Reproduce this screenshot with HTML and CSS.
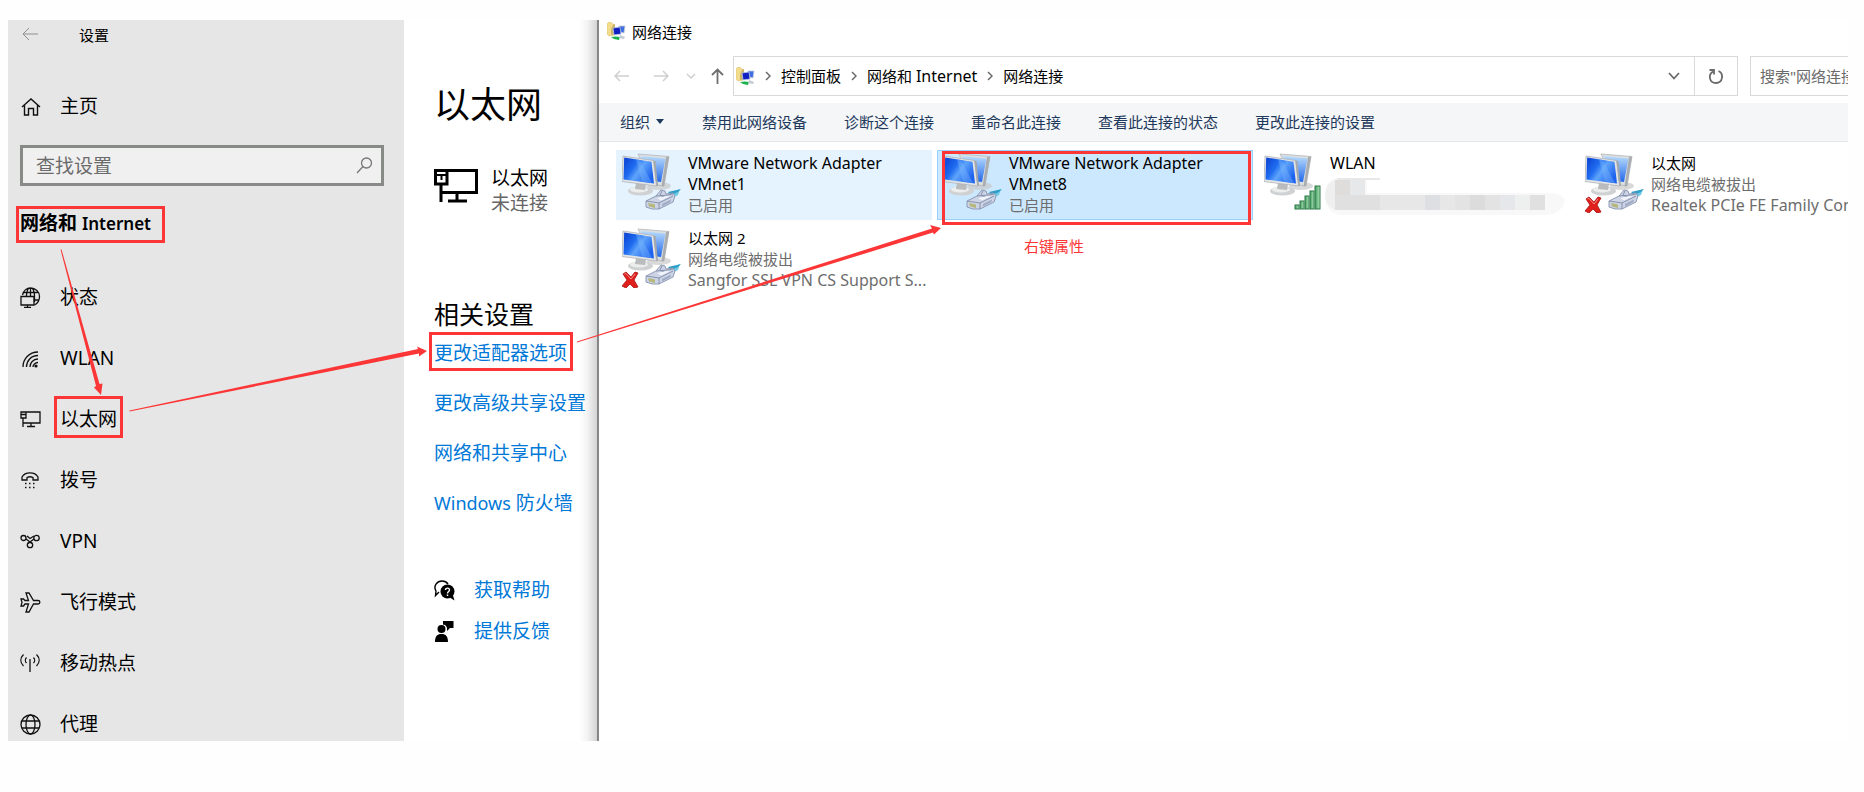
FILE: index.html
```html
<!DOCTYPE html>
<html lang="zh-CN">
<head>
  <meta charset="UTF-8">
  <meta name="viewport" content="width=device-width, initial-scale=1.0">
  <title>网络连接</title>
  <link rel="stylesheet" href="styles.css">
</head>
<body>

  <!-- Shared icons -->
  <svg class="sprite" aria-hidden="true">
    <defs>
      <linearGradient id="screen" x1="0" y1="0" x2="1" y2="0.6">
        <stop offset="0" stop-color="#0a3fd0"/>
        <stop offset="0.4" stop-color="#1f6cf0"/>
        <stop offset="0.6" stop-color="#5fa4fb"/>
        <stop offset="1" stop-color="#1d63ee"/>
      </linearGradient>
      <linearGradient id="screenBack" x1="0" y1="0" x2="0" y2="1">
        <stop offset="0" stop-color="#b9dcfc"/>
        <stop offset="1" stop-color="#2268ea"/>
      </linearGradient>
      <linearGradient id="bars" x1="0" y1="0" x2="1" y2="0">
        <stop offset="0" stop-color="#3f9a5e"/>
        <stop offset="1" stop-color="#b5e6bd"/>
      </linearGradient>
    </defs>

    <symbol id="monitors" viewBox="0 0 60 60">
      <ellipse cx="37" cy="33" rx="12" ry="4" fill="#c9c9c9" opacity="0.7"/>
      <path d="M16 1L47 3.5L42 33L30 31Z" fill="#dcdfe2" stroke="#b4b7ba" stroke-width="0.8"/>
      <path d="M18.500 3L43.500 5.500L39 29L31 28Z" fill="url(#screenBack)"/>
      <path d="M47 3.500L42 33L39.500 33.500L44 4Z" fill="#a9adb0"/>
      <ellipse cx="18.500" cy="38" rx="12.500" ry="4.500" fill="#cfd1d3"/>
      <ellipse cx="17" cy="36.500" rx="9" ry="3" fill="#eceded"/>
      <path d="M14 30L24 31L23 37L13 36Z" fill="#b9bbbd"/>
      <path d="M1 3L31.500 7.500L34.500 33L0 28.500Z" fill="#e3e5e7" stroke="#b1b4b7" stroke-width="0.8"/>
      <path d="M31.500 7.500L33.500 8L36 33L34.500 33Z" fill="#a4a8ab"/>
      <path d="M2.200 4.500L29.500 8.700L32 30.500L1.500 26.500Z" fill="url(#screen)"/>
      <path d="M14 6.500L18 7.200L30 30L20 28.500Z" fill="#7db9fd" opacity="0.4"/>
    </symbol>

    <symbol id="plug" viewBox="0 0 60 60">
      <path d="M47 41L58 36L56 42L50 45Z" fill="#6fcbe6"/>
      <path d="M46 39L59 36L56 39L49 42Z" fill="#2f9fc8"/>
      <path d="M24 48L34 43L39 37L43 38L44 41L51 40L53 43L51 49L37 56L30 56L24 54Z" fill="#ccd4e6" stroke="#8793ae" stroke-width="0.900"/>
      <path d="M34 43L46 42L51 41M24 48L37 50L51 43M37 50V56M40 38L38 42L44 45" fill="none" stroke="#7f8ba6" stroke-width="0.900"/>
      <path d="M35 45L45 43L48 43.500L39 47.500Z" fill="#f1f4fa"/>
      <path d="M40 51L49 46.500L48.500 49L40 53.500Z" fill="#9fabc6"/>
      <path d="M26 50L33 51.500V55L27 53.500Z" fill="#b6b77c"/>
    </symbol>

    <symbol id="cross" viewBox="0 0 60 60">
      <path d="M1 46L4 44L9 49L13 44L16 45L12 52L16 59L12 60L8 56L4 60L0 58L5 52Z" fill="#e0201c" stroke="#a8120f" stroke-width="0.800"/>
      <path d="M2.500 46L4 45.500L9 51L13 46" fill="none" stroke="#f58a85" stroke-width="1"/>
    </symbol>

    <symbol id="signal" viewBox="0 0 60 60">
      <g fill="url(#bars)" stroke="#2c7a47" stroke-width="1">
        <rect x="31" y="52" width="4" height="4"/>
        <rect x="36" y="48" width="4" height="8"/>
        <rect x="41" y="43" width="4" height="13"/>
        <rect x="46" y="38" width="4" height="18"/>
        <rect x="51" y="33" width="5" height="23"/>
      </g>
    </symbol>

    <symbol id="folder-net" viewBox="0 0 19 19">
      <path d="M0 2L2 0H4L5 2L7 2V13L2 14L0 12Z" fill="#f3dc8c" stroke="#dcc068" stroke-width="0.600"/>
      <path d="M6 3L8 2V12L4 13V7Z" fill="#c9b26a"/>
      <path d="M12 4L18 4L17 11L13 10Z" fill="#3d6fe0" stroke="#c4cbd8" stroke-width="0.800"/>
      <path d="M6 6L13 5L14 12L7 13Z" fill="#1020c0" stroke="#b9c6e8" stroke-width="0.800"/>
      <path d="M4 15L9 14.500L13 15L12 18L7 17Z" fill="#19b24b"/>
      <path d="M13 13L18 15L17 17L12 16Z" fill="#c3cbd3"/>
    </symbol>

    <symbol id="chevron" viewBox="0 0 6 10">
      <path d="M1 1L5 5L1 9" fill="none" stroke="#6a6a6a" stroke-width="1.500"/>
    </symbol>

    <symbol id="ethernet" viewBox="0 0 44 34">
      <path d="M13 1.500H42.500V23.500H7" fill="none" stroke="currentColor" stroke-width="3"/>
      <path d="M1.500 1.500H13V15H1.500ZM7 15V33M23 24V32M14 32H33" fill="none" stroke="currentColor" stroke-width="3"/>
      <path d="M3 6H12M7.500 6V11" fill="none" stroke="currentColor" stroke-width="2"/>
    </symbol>
  </svg>

  <div class="desktop">

    <aside class="sidebar">
      <div class="sidebar-title">
        <button type="button" class="icon-btn" aria-label="后退">
          <svg width="21" height="14" viewBox="0 0 21 14" fill="none" stroke="#8f8f8f"><path d="M16 7H1M7 1L1 7L7 13"/></svg>
        </button>
        <span>设置</span>
      </div>

      <a href="#" class="nav-link home">
        <svg viewBox="0 0 21 21" fill="none" stroke="#111" stroke-width="1.400"><path d="M2 11L11 3L20 11M4.500 9V19H8.500V12.500H13.500V19H17.500V9"/></svg>
        <span>主页</span>
      </a>

      <div class="search">
        <input type="text" placeholder="查找设置" aria-label="查找设置">
        <svg width="17" height="17" viewBox="0 0 17 17" fill="none" stroke="#777" stroke-width="1.300"><circle cx="10.500" cy="6" r="5"/><path d="M7 9.500L1 16"/></svg>
      </div>

      <h2 class="sidebar-heading"><span class="marked mark-heading">网络和 <span class="en">Internet</span></span></h2>

      <nav class="sidebar-nav">
        <a href="#" class="nav-link">
          <svg viewBox="0 0 21 21" fill="none" stroke="#111" stroke-width="1.300"><path d="M2.500 8C3.500 3.500 7 1 10.500 1C15.500 1 19.500 5 19.500 9.500C19.500 13.500 17.500 16.500 14.500 18M3.500 5.500H17.500M9 1C7 3 6.500 6 6.500 9.500M12 1C14 3 14.500 6 14.500 9.500V15M14.500 13H19M10.500 1V9.500"/><path d="M1 9.500H14V18H1ZM7.500 18V20.500M4 20.500H11"/></svg>
          <span>状态</span>
        </a>
        <a href="#" class="nav-link">
          <svg viewBox="0 0 21 21" fill="none" stroke="#111" stroke-width="1.300"><path d="M3 19C3 11 9 4 18 4M6.500 19C6.500 13 11 7.500 18 7.500M10 19C10 15 13 11 18 11M13 19C13 17 15 14.500 18 14.500"/><circle cx="16" cy="18" r="1.600" fill="#111" stroke="none"/></svg>
          <span>WLAN</span>
        </a>
        <a href="#" class="nav-link">
          <svg viewBox="0 0 21 21" fill="none" stroke="#111" stroke-width="1.300"><path d="M6 3H20V14H3M1 3H6V9H1ZM3 9V18M11 14V17.500M7 17.500H15M1 5.500H6"/></svg>
          <span class="marked mark-nav">以太网</span>
        </a>
        <a href="#" class="nav-link">
          <svg viewBox="0 0 21 21" fill="none" stroke="#111" stroke-width="1.300"><path d="M2 10V7C5 1.500 15 1.500 18 7V10H13V7.500C11 6.500 9 6.500 7 7.500V10Z"/><path d="M5 13.500H15M5 17.500H15" stroke-width="1.500" stroke-dasharray="1.500 2.500"/></svg>
          <span>拨号</span>
        </a>
        <a href="#" class="nav-link">
          <svg viewBox="0 0 21 21" fill="none" stroke="#111" stroke-width="1.300"><circle cx="3.500" cy="7" r="2.500"/><circle cx="16.500" cy="7" r="2.700"/><circle cx="10" cy="14" r="2.700"/><path d="M6 8L12 12.500M14 8L8 12.500M7 5L10 7.500L14 5"/></svg>
          <span>VPN</span>
        </a>
        <a href="#" class="nav-link">
          <svg viewBox="0 0 21 21" fill="none" stroke="#111" stroke-width="1.300"><path d="M1 7H3.500L5 8.500H8.500L6 1H9L13.500 8.500H18C20.500 8.500 20.500 12 18 12H13.500L9 20H6L8.500 12H5L3.500 14H1L2 10.300Z"/></svg>
          <span>飞行模式</span>
        </a>
        <a href="#" class="nav-link">
          <svg viewBox="0 0 21 21" fill="none" stroke="#111" stroke-width="1.300"><path d="M10 6V19M6.500 10C5 8.500 5 6 6.500 4.500M13.500 10C15 8.500 15 6 13.500 4.500M3.500 13C0 9.500 0 5 3.500 1.500M16.500 13C20 9.500 20 5 16.500 1.500"/></svg>
          <span>移动热点</span>
        </a>
        <a href="#" class="nav-link">
          <svg viewBox="0 0 21 21" fill="none" stroke="#111" stroke-width="1.300"><circle cx="10.500" cy="10.500" r="9.500"/><ellipse cx="10.500" cy="10.500" rx="4.500" ry="9.500"/><path d="M2 7H19M2 14H19"/></svg>
          <span>代理</span>
        </a>
      </nav>
    </aside>

    <main class="settings">
      <h1>以太网</h1>
      <div class="status">
        <svg width="44" height="34"><use href="#ethernet"/></svg>
        <p>以太网<br><span>未连接</span></p>
      </div>

      <h2>相关设置</h2>
      <ul class="links">
        <li><a href="#" class="marked mark-link">更改适配器选项</a></li>
        <li><a href="#">更改高级共享设置</a></li>
        <li><a href="#">网络和共享中心</a></li>
        <li><a href="#"><span class="en">Windows</span> 防火墙</a></li>
      </ul>

      <ul class="support">
        <li>
          <svg width="21" height="21" viewBox="0 0 21 21"><path d="M5 12L1.500 15.500L2 11C-1 6 3 1 8 1C11 1 13 2.500 14 4" fill="none" stroke="#000" stroke-width="1.400"/><circle cx="13.500" cy="11.500" r="7"/><path d="M15 17L20.500 20.500L18.500 14Z"/><path d="M11.500 10C11.500 7.500 15.500 7.500 15.500 10C15.500 11.500 13.500 11.500 13.500 13.500M13.500 14.500V16" fill="none" stroke="#fff" stroke-width="1.400"/></svg>
          <a href="#">获取帮助</a>
        </li>
        <li>
          <svg width="21" height="21" viewBox="0 0 21 21"><circle cx="7.500" cy="8" r="4"/><path d="M1 21C1 15.500 3 13 7.500 13C12 13 14 15.500 14 21ZM9 0H19.500V7H16L13 10V7C12 4 11 4 9 3.500Z"/></svg>
          <a href="#">提供反馈</a>
        </li>
      </ul>
    </main>

    <section class="explorer">
      <header class="window-title">
        <svg width="19" height="19"><use href="#folder-net"/></svg>
        <span>网络连接</span>
      </header>

      <div class="address-row">
        <div class="history">
          <button type="button" class="icon-btn" aria-label="后退"><svg width="16" height="12" viewBox="0 0 16 12" fill="none" stroke="#cfcfcf" stroke-width="1.500"><path d="M15 6H1M6 1L1 6L6 11"/></svg></button>
          <button type="button" class="icon-btn" aria-label="前进"><svg width="16" height="12" viewBox="0 0 16 12" fill="none" stroke="#cfcfcf" stroke-width="1.500"><path d="M1 6H15M10 1L15 6L10 11"/></svg></button>
          <button type="button" class="icon-btn" aria-label="最近"><svg width="10" height="6" viewBox="0 0 10 6" fill="none" stroke="#cfcfcf" stroke-width="1.500"><path d="M1 1L5 5L9 1"/></svg></button>
          <button type="button" class="icon-btn" aria-label="上移"><svg width="13" height="16" viewBox="0 0 13 16" fill="none" stroke="#6e6e6e" stroke-width="1.800"><path d="M6.500 16V2M1 7L6.500 1.500L12 7"/></svg></button>
        </div>

        <div class="address">
          <svg width="19" height="19"><use href="#folder-net"/></svg>
          <svg class="sep" width="6" height="10"><use href="#chevron"/></svg>
          <a href="#">控制面板</a>
          <svg class="sep" width="6" height="10"><use href="#chevron"/></svg>
          <a href="#">网络和 <span class="en">Internet</span></a>
          <svg class="sep" width="6" height="10"><use href="#chevron"/></svg>
          <a href="#">网络连接</a>
          <button type="button" class="icon-btn dropdown" aria-label="展开"><svg width="12" height="8" viewBox="0 0 12 8" fill="none" stroke="#6a6a6a" stroke-width="1.800"><path d="M1 1L6 6.500L11 1"/></svg></button>
          <button type="button" class="icon-btn refresh" aria-label="刷新"><svg width="16" height="17" viewBox="0 0 16 17" fill="none" stroke="#6a6a6a" stroke-width="1.800"><path d="M10.500 3C16 5.500 15 15 8 15C1 15 0 6.500 5 3.500M1.500 2H6V6.500"/></svg></button>
        </div>

        <input class="explorer-search" type="text" placeholder="搜索&quot;网络连接&quot;" aria-label="搜索网络连接">
      </div>

      <div class="toolbar">
        <button type="button">组织<svg width="10" height="5" viewBox="0 0 10 5"><path d="M1 0H9L5 5Z" fill="#1e395b"/></svg></button>
        <button type="button">禁用此网络设备</button>
        <button type="button">诊断这个连接</button>
        <button type="button">重命名此连接</button>
        <button type="button">查看此连接的状态</button>
        <button type="button">更改此连接的设置</button>
      </div>

      <div class="adapters">
        <div class="adapter hover">
          <svg width="60" height="60"><use href="#monitors"/><use href="#plug"/></svg>
          <p><b class="en">VMware Network Adapter<br>VMnet1</b><br><span>已启用</span></p>
        </div>
        <div class="adapter selected marked mark-adapter">
          <svg width="60" height="60"><use href="#monitors"/><use href="#plug"/></svg>
          <p><b class="en">VMware Network Adapter<br>VMnet8</b><br><span>已启用</span></p>
          <strong class="note">右键属性</strong>
        </div>
        <div class="adapter">
          <svg width="60" height="60"><use href="#monitors"/><use href="#signal"/></svg>
          <p><b class="en">WLAN</b></p>
          <!-- Hidden network name -->
          <svg class="mosaic" width="242" height="40" viewBox="0 0 242 40">
            <path d="M12 1H55V3H42V16H222C234 16 238 19 240 23C238 32 232 38 220 38H18C6 38 0 30 0 19C0 8 5 1 12 1Z" fill="#f8f8f8"/>
            <path d="M10 3C3 6 0 12 0 19C1 26 4 30 10 33Z" fill="#eeefee"/>
            <path d="M12 1H55V3H12Z" fill="#e8e8e8"/>
            <path d="M10 3H25V18H10Z" fill="#dfdddc"/>
            <path d="M25 3H40V18H25Z" fill="#e7e8ea"/>
            <path d="M10 18H55V33H10ZM205 18H220V33H205Z" fill="#e0e0e1"/>
            <path d="M55 18H100V33H55ZM115 18H130V33H115Z" fill="#e7e7e8"/>
            <path d="M100 18H115V33H100Z" fill="#dddfe2"/>
            <path d="M130 18H145V33H130ZM160 18H175V33H160Z" fill="#e3e3e4"/>
            <path d="M145 18H160V33H145Z" fill="#dddcdc"/>
            <path d="M175 18H190V33H175Z" fill="#e6e7ea"/>
            <path d="M190 18H205V33H190Z" fill="#eeefef"/>
          </svg>
        </div>
        <div class="adapter">
          <svg width="60" height="60"><use href="#monitors"/><use href="#plug"/><use href="#cross"/></svg>
          <p>以太网<br><span>网络电缆被拔出<br><b class="en">Realtek PCIe FE Family Controller</b></span></p>
        </div>
        <div class="adapter">
          <svg width="60" height="60"><use href="#monitors"/><use href="#plug"/><use href="#cross"/></svg>
          <p>以太网 2<br><span>网络电缆被拔出<br><b class="en">Sangfor SSL VPN CS Support S...</b></span></p>
        </div>
      </div>
    </section>

    <!-- Arrows between the marked steps -->
    <svg class="arrows" width="960" height="420" viewBox="0 0 960 420" fill="#fc3636" aria-hidden="true">
      <path d="M52.500 229.500L53.500 229.500L91.500 364L94.500 363.500L93 375L86 367.500L88 366Z"/>
      <path d="M121.500 390.500L410 329L409 326.500L419 331L411 336.500L411 333.500L121.500 391.500Z"/>
      <path d="M569 321.500L924 208.500L922 205L933 208L926 214.500L925 212.500L569 322.500Z"/>
    </svg>
  </div>

</body>
</html>
```
FILE: styles.css
```css
* {
  margin: 0;
  padding: 0;
  box-sizing: border-box;
}

body {
  font-family: 'Noto Sans', 'Noto Sans CJK SC', sans-serif;
  background: #fefefe;
  color: #000;
  font-size: 15px;
  min-height: 100vh;
  display: flex;
  padding: 20px 16px 51px 8px;
}

a {
  color: inherit;
  text-decoration: none;
}

ul {
  list-style: none;
}

button {
  font: inherit;
  color: inherit;
  background: none;
  border: none;
  cursor: pointer;
}

svg {
  display: block;
  flex: none;
}

.sprite {
  position: absolute;
  width: 0;
  height: 0;
}

.desktop {
  position: relative;
  flex: 1;
  min-width: 0;
  display: flex;
}

.icon-btn {
  display: flex;
  align-items: center;
}

/* Red boxes round the steps */
.marked {
  position: relative;
}

.marked::after {
  content: '';
  position: absolute;
  border: 3px solid #fc3636;
  pointer-events: none;
}

.mark-heading::after {
  inset: -5px -14px -8px -4px;
}

.mark-nav::after {
  inset: -11px -6px -7px -6px;
}

.mark-link::after {
  inset: -9px -6px -6px -5px;
}

.mark-adapter::after {
  inset: 1px 2px -5px 5px;
}

/* Settings sidebar */
.sidebar {
  width: 396px;
  flex: none;
  background: #e6e6e6;
  padding: 0 20px 5px 12px;
}

.sidebar-title {
  display: flex;
  align-items: center;
  gap: 36px;
  height: 28px;
  padding-left: 2px;
}

.nav-link {
  display: flex;
  align-items: center;
  gap: 19px;
  font-size: 19px;
  line-height: 24px;
}

.nav-link svg {
  width: 21px;
  height: 21px;
}

.home {
  margin-top: 46px;
}

.search {
  display: flex;
  align-items: center;
  height: 41px;
  margin-top: 27px;
  padding: 0 8px 0 13px;
  border: 3px solid #888a88;
  background: #f0f0f0;
}

.search input {
  flex: 1;
  min-width: 0;
  border: none;
  outline: none;
  background: none;
  font: inherit;
  font-size: 19px;
}

input::placeholder {
  color: #6b6b6b;
  opacity: 1;
}

.sidebar-heading {
  margin-top: 25px;
  font-size: 19px;
  line-height: 24px;
  font-weight: 600;
}

.sidebar-heading .marked {
  display: block;
  width: fit-content;
}

.en {
  line-height: 1;
}

.sidebar-heading .en {
  font-size: 17px;
}

.sidebar-nav {
  display: flex;
  flex-direction: column;
  gap: 37px;
  margin-top: 50px;
}

/* Settings page */
.settings {
  width: 193px;
  flex: none;
  padding: 61px 0 0 30px;
  background: linear-gradient(to left, #d4d4d4, #f4f4f4 10px, #fff 18px);
  font-size: 19px;
  line-height: 24px;
  white-space: nowrap;
}

.settings h1 {
  font-size: 36px;
  line-height: 48px;
  font-weight: 400;
}

.settings .en {
  font-size: 18px;
}

.status {
  display: flex;
  gap: 13px;
  margin-top: 37px;
  line-height: 25px;
}

.status svg {
  margin-top: 3px;
}

.status span {
  color: #666;
}

.settings h2 {
  margin-top: 82px;
  font-size: 25px;
  line-height: 32px;
  font-weight: 400;
}

.settings a {
  display: inline-block;
  color: #0078d7;
}

.links {
  display: flex;
  flex-direction: column;
  gap: 26px;
  margin-top: 11px;
}

.support {
  display: flex;
  flex-direction: column;
  gap: 17px;
  margin-top: 63px;
}

.support li {
  display: flex;
  align-items: center;
  gap: 19px;
}

/* Network connections window */
.explorer {
  flex: 1;
  min-width: 0;
  overflow: hidden;
  border-left: 2px solid #868686;
  background: #fff;
  white-space: nowrap;
}

.explorer .en {
  font-size: 16px;
  font-weight: 400;
}

.window-title {
  display: flex;
  align-items: center;
  gap: 6px;
  height: 23px;
  padding-left: 8px;
}

.address-row {
  display: flex;
  height: 40px;
  margin-top: 13px;
  padding-left: 15px;
}

.history {
  display: grid;
  grid-template-columns: 39px 33px 25px 22px;
  align-items: center;
}

.address {
  flex: 1;
  display: flex;
  align-items: center;
  padding-left: 2px;
  border: 1px solid #d9d9d9;
}

.address a {
  padding-bottom: 2px;
}

.sep {
  margin: 0 10px;
}

.dropdown {
  margin-left: auto;
  padding: 0 14px;
}

.refresh {
  width: 43px;
  height: 100%;
  justify-content: center;
  border-left: 1px solid #d9d9d9;
}

.explorer-search {
  width: 98px;
  flex: none;
  margin-left: 12px;
  padding-left: 9px;
  border: 1px solid #d9d9d9;
  border-right: none;
  outline: none;
  font: inherit;
}

.toolbar {
  display: flex;
  align-items: center;
  gap: 37px;
  height: 39px;
  margin-top: 7px;
  padding: 0 0 2px 21px;
  background: #f4f6f8;
  border-bottom: 1px solid #e4e7ea;
  color: #1e395b;
}

.toolbar button {
  display: flex;
  align-items: center;
  gap: 5px;
}

.adapters {
  display: grid;
  grid-template-columns: repeat(4, 316px);
  gap: 5px;
  padding: 8px 0 0 17px;
}

.adapter {
  display: flex;
  gap: 6px;
  height: 70px;
  padding: 3px 0 0 6px;
  line-height: 21px;
  position: relative;
}

.adapter span {
  color: #6d6d6d;
}

.hover {
  background: #e5f3ff;
}

.selected {
  background: #cce8ff;
  box-shadow: inset 0 0 0 1px #99d1ff;
}

.note {
  position: absolute;
  top: 86px;
  left: 87px;
  font-weight: 400;
  color: #fc3636;
}

.mosaic {
  position: absolute;
  top: 27px;
  left: 67px;
}

.arrows {
  position: absolute;
  top: 0;
  left: 0;
  pointer-events: none;
}
```
